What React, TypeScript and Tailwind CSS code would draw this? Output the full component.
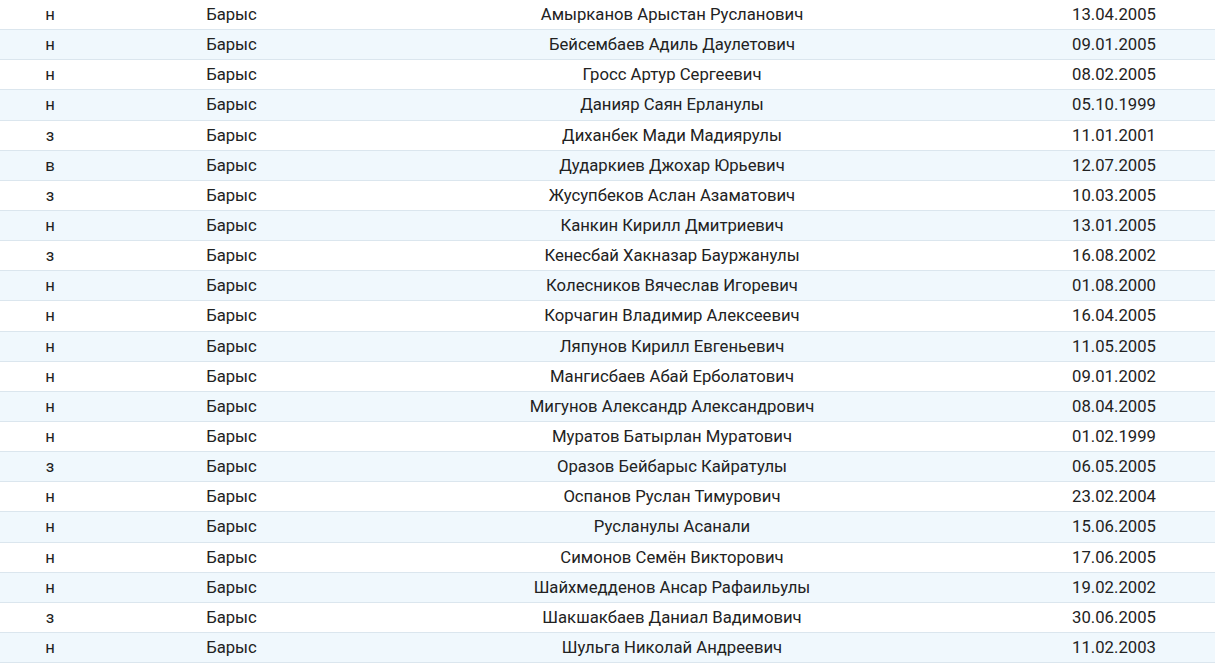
import React from 'react';

type Player = { pos: string; team: string; name: string; born: string };

const players: Player[] = [
  { pos: 'н', team: 'Барыс', name: 'Амырканов Арыстан Русланович', born: '13.04.2005' },
  { pos: 'н', team: 'Барыс', name: 'Бейсембаев Адиль Даулетович', born: '09.01.2005' },
  { pos: 'н', team: 'Барыс', name: 'Гросс Артур Сергеевич', born: '08.02.2005' },
  { pos: 'н', team: 'Барыс', name: 'Данияр Саян Ерланулы', born: '05.10.1999' },
  { pos: 'з', team: 'Барыс', name: 'Диханбек Мади Мадиярулы', born: '11.01.2001' },
  { pos: 'в', team: 'Барыс', name: 'Дударкиев Джохар Юрьевич', born: '12.07.2005' },
  { pos: 'з', team: 'Барыс', name: 'Жусупбеков Аслан Азаматович', born: '10.03.2005' },
  { pos: 'н', team: 'Барыс', name: 'Канкин Кирилл Дмитриевич', born: '13.01.2005' },
  { pos: 'з', team: 'Барыс', name: 'Кенесбай Хакназар Бауржанулы', born: '16.08.2002' },
  { pos: 'н', team: 'Барыс', name: 'Колесников Вячеслав Игоревич', born: '01.08.2000' },
  { pos: 'н', team: 'Барыс', name: 'Корчагин Владимир Алексеевич', born: '16.04.2005' },
  { pos: 'н', team: 'Барыс', name: 'Ляпунов Кирилл Евгеньевич', born: '11.05.2005' },
  { pos: 'н', team: 'Барыс', name: 'Мангисбаев Абай Ерболатович', born: '09.01.2002' },
  { pos: 'н', team: 'Барыс', name: 'Мигунов Александр Александрович', born: '08.04.2005' },
  { pos: 'н', team: 'Барыс', name: 'Муратов Батырлан Муратович', born: '01.02.1999' },
  { pos: 'з', team: 'Барыс', name: 'Оразов Бейбарыс Кайратулы', born: '06.05.2005' },
  { pos: 'н', team: 'Барыс', name: 'Оспанов Руслан Тимурович', born: '23.02.2004' },
  { pos: 'н', team: 'Барыс', name: 'Русланулы Асанали', born: '15.06.2005' },
  { pos: 'н', team: 'Барыс', name: 'Симонов Семён Викторович', born: '17.06.2005' },
  { pos: 'н', team: 'Барыс', name: 'Шайхмедденов Ансар Рафаильулы', born: '19.02.2002' },
  { pos: 'з', team: 'Барыс', name: 'Шакшакбаев Даниал Вадимович', born: '30.06.2005' },
  { pos: 'н', team: 'Барыс', name: 'Шульга Николай Андреевич', born: '11.02.2003' },
];

export default function App() {
  return (
    <div className="min-h-screen bg-white text-[16.7px] text-[#222222] font-['Roboto',sans-serif]">
      {players.map((p, i) => (
        <div
          key={p.name}
          className={`grid grid-cols-[100px_263px_618px_1fr] h-[30.15px] items-center border-b border-[#dbe6ee] ${
            i % 2 === 1 ? 'bg-[#f0f8fd]' : 'bg-white'
          }`}
        >
          <div className="text-center">{p.pos}</div>
          <div className="text-center">{p.team}</div>
          <div className="text-center">{p.name}</div>
          <div className="text-center pl-8">{p.born}</div>
        </div>
      ))}
    </div>
  );
}
